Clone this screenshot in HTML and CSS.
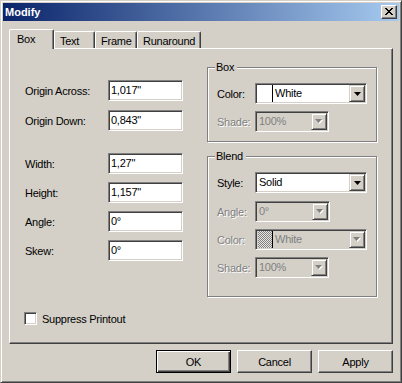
FILE: index.html
```html
<!DOCTYPE html>
<html lang="en">
<head>
    <meta charset="UTF-8">
    <title>Modify</title>
    <link rel="stylesheet" href="styles.css">
</head>
<body>
<div class="window">
    <div class="titlebar">
        <span class="title">Modify</span>
        <button class="close">
            <svg width="8" height="7" viewBox="0 0 8 7" shape-rendering="crispEdges">
                <path d="M0 0h2v1h-2z M6 0h2v1h-2z M1 1h2v1h-2z M5 1h2v1h-2z M2 2h4v1h-4z M3 3h2v1h-2z M2 4h4v1h-4z M1 5h2v1h-2z M5 5h2v1h-2z M0 6h2v1h-2z M6 6h2v1h-2z" fill="#000"/>
            </svg>
        </button>
    </div>

    <div class="client">
        <div class="tabs">
            <div class="tab active tab-box">Box</div>
            <div class="tab tab-text">Text</div>
            <div class="tab tab-frame">Frame</div>
            <div class="tab tab-run">Runaround</div>
        </div>

        <div class="panel">
            <div class="panel-top">
                <div class="fields">
                    <div class="block pos">
                        <div class="row"><label>Origin Across:</label><div class="edit">1,017"</div></div>
                        <div class="row"><label>Origin Down:</label><div class="edit">0,843"</div></div>
                    </div>
                    <div class="block size">
                        <div class="row"><label>Width:</label><div class="edit">1,27"</div></div>
                        <div class="row"><label>Height:</label><div class="edit">1,157"</div></div>
                        <div class="row"><label>Angle:</label><div class="edit">0°</div></div>
                        <div class="row"><label>Skew:</label><div class="edit">0°</div></div>
                    </div>
                </div>

                <div class="groups">
                    <div class="group group-box">
                        <span class="legend">Box</span>
                        <div class="row">
                            <label>Color:</label>
                            <div class="combo wide">
                                <span class="swatch"></span>
                                <span class="value">White</span>
                                <span class="drop"><svg width="7" height="4" viewBox="0 0 7 4"><polygon points="0,0 7,0 3.5,4" fill="#000"/></svg></span>
                            </div>
                        </div>
                        <div class="row">
                            <label class="off">Shade:</label>
                            <div class="combo short disabled">
                                <span class="value">100%</span>
                                <span class="drop"><svg width="8" height="5" viewBox="0 0 8 5"><polygon points="1,1 8,1 4.5,5" fill="#fff"/><polygon points="0,0 7,0 3.5,4" fill="#808080"/></svg></span>
                            </div>
                        </div>
                    </div>

                    <div class="group group-blend">
                        <span class="legend">Blend</span>
                        <div class="row">
                            <label>Style:</label>
                            <div class="combo wide">
                                <span class="value">Solid</span>
                                <span class="drop"><svg width="7" height="4" viewBox="0 0 7 4"><polygon points="0,0 7,0 3.5,4" fill="#000"/></svg></span>
                            </div>
                        </div>
                        <div class="row first">
                            <label class="off">Angle:</label>
                            <div class="combo angle disabled">
                                <span class="value">0°</span>
                                <span class="drop"><svg width="8" height="5" viewBox="0 0 8 5"><polygon points="1,1 8,1 4.5,5" fill="#fff"/><polygon points="0,0 7,0 3.5,4" fill="#808080"/></svg></span>
                            </div>
                        </div>
                        <div class="row">
                            <label class="off">Color:</label>
                            <div class="combo wide disabled">
                                <span class="swatch hatch"></span>
                                <span class="value">White</span>
                                <span class="drop"><svg width="8" height="5" viewBox="0 0 8 5"><polygon points="1,1 8,1 4.5,5" fill="#fff"/><polygon points="0,0 7,0 3.5,4" fill="#808080"/></svg></span>
                            </div>
                        </div>
                        <div class="row">
                            <label class="off">Shade:</label>
                            <div class="combo short disabled">
                                <span class="value">100%</span>
                                <span class="drop"><svg width="8" height="5" viewBox="0 0 8 5"><polygon points="1,1 8,1 4.5,5" fill="#fff"/><polygon points="0,0 7,0 3.5,4" fill="#808080"/></svg></span>
                            </div>
                        </div>
                    </div>
                </div>
            </div>

            <div class="check">
                <span class="checkbox"></span>
                <span>Suppress Printout</span>
            </div>
        </div>

        <div class="buttons">
            <button class="btn default">OK</button>
            <button class="btn">Cancel</button>
            <button class="btn">Apply</button>
        </div>
    </div>
</div>
</body>
</html>
```

FILE: styles.css
```css
body {
    margin: 0;
    background: #d4d0c8;
    font-family: "Liberation Sans", Arial, sans-serif;
    font-size: 11px;
    letter-spacing: -0.25px;
    color: #000;
}

/* window frame */
.window {
    width: 402px;
    height: 383px;
    box-sizing: border-box;
    border: 1px solid;
    border-color: #d4d0c8 #404040 #404040 #d4d0c8;
    box-shadow: inset 1px 1px #fff, inset -1px -1px #808080;
    padding: 2px;
    background: #d4d0c8;
    display: flex;
    flex-direction: column;
}
.titlebar {
    height: 18px;
    flex: none;
    display: flex;
    align-items: center;
    justify-content: space-between;
    padding: 0 2px;
    background: linear-gradient(to right, #0a246a, #a6caf0);
}
.title {
    color: #fff;
    font-weight: bold;
    font-size: 11px;
    letter-spacing: 0;
}
.close {
    width: 16px;
    height: 14px;
    box-sizing: border-box;
    padding: 0 1px 1px 0;
    border: 1px solid;
    border-color: #fff #404040 #404040 #fff;
    box-shadow: inset -1px -1px #808080;
    background: #d4d0c8;
    display: flex;
    align-items: center;
    justify-content: center;
}
.close svg { display: block; }

.client {
    flex: 1;
    padding: 8px 6px 0;
    display: flex;
    flex-direction: column;
}

/* tabs */
.tabs {
    display: flex;
    align-items: flex-end;
    height: 20px;
    margin-bottom: -1px;
    position: relative;
    z-index: 1;
}
.tab {
    box-sizing: border-box;
    height: 17px;
    margin-bottom: 1px;
    padding: 3px 0 0 5px;
    border: 1px solid #fff;
    border-bottom: none;
    border-right-color: #404040;
    box-shadow: inset -1px 0 #808080;
    border-radius: 2px 2px 0 0;
    line-height: 13px;
    background: #d4d0c8;
}
.tab.active {
    height: 20px;
    margin-bottom: 0;
    padding-left: 7px;
}
.tab-box { width: 45px; }
.tab-text { width: 41px; }
.tab-frame { width: 42px; }
.tab-run { width: 64px; }

.panel {
    box-sizing: border-box;
    height: 296px;
    border: 1px solid;
    border-color: #fff #404040 #404040 #fff;
    box-shadow: inset -1px -1px #808080;
    display: flex;
    flex-direction: column;
}
.panel-top { display: flex; }

/* left fields */
.fields {
    padding: 31px 0 0 15px;
}
.row {
    display: flex;
    align-items: center;
}
.fields label { width: 83px; }
.pos .row + .row { margin-top: 9px; }
.size { margin-top: 22px; }
.size .row + .row { margin-top: 8px; }

.edit {
    width: 75px;
    height: 21px;
    box-sizing: border-box;
    border: 1px solid;
    border-color: #808080 #fff #fff #808080;
    box-shadow: inset 1px 1px #404040, inset -1px -1px #d4d0c8;
    background: #fff;
    padding: 0 2px;
    line-height: 18px;
}

/* group boxes */
.groups {
    margin-left: 24px;
    padding-top: 18px;
}
.group {
    position: relative;
    width: 170px;
    box-sizing: border-box;
    border: 1px solid #808080;
    box-shadow: inset 1px 1px #fff, 1px 1px #fff;
    padding: 15px 0 0 9px;
}
.group-box { height: 75px; }
.group-blend { height: 141px; margin-top: 14px; }
.legend {
    position: absolute;
    top: -7px;
    left: 7px;
    padding: 0 3px 0 1px;
    background: #d4d0c8;
    line-height: 13px;
}
.group label { width: 38px; }
.group .row + .row { margin-top: 7px; }
.group .row.first { margin-top: 8px; }
.off {
    color: #808080;
    text-shadow: 1px 1px #fff;
}

/* combo boxes */
.combo {
    display: flex;
    align-items: center;
    height: 21px;
    box-sizing: border-box;
    border: 1px solid;
    border-color: #808080 #fff #fff #808080;
    box-shadow: inset 1px 1px #404040, inset -1px -1px #d4d0c8;
    background: #fff;
    padding: 1px;
}
.combo.wide { width: 112px; }
.combo.short { width: 74px; }
.combo.angle { width: 75px; }
.combo.disabled { background: #d4d0c8; color: #808080; }
.combo .value {
    flex: 1;
    padding-left: 2px;
    line-height: 17px;
}
.swatch {
    width: 16px;
    height: 17px;
    box-sizing: border-box;
    border-right: 1px solid #000;
    background: #fff;
}
.swatch.hatch {
    border-left: 1px solid #d4d0c8;
    background: repeating-conic-gradient(#808080 0 25%, #e8e6e2 0 50%) 0 0 / 2px 2px;
}
.drop {
    width: 16px;
    height: 17px;
    box-sizing: border-box;
    border: 1px solid;
    border-color: #d4d0c8 #404040 #404040 #d4d0c8;
    box-shadow: inset 1px 1px #fff, inset -1px -1px #808080;
    background: #d4d0c8;
    display: flex;
    align-items: center;
    justify-content: center;
}
.drop svg { display: block; }

/* checkbox */
.check {
    display: flex;
    align-items: center;
    margin: 15px 0 0 14px;
}
.checkbox {
    width: 13px;
    height: 13px;
    box-sizing: border-box;
    border: 1px solid;
    border-color: #808080 #fff #fff #808080;
    box-shadow: inset 1px 1px #404040, inset -1px -1px #d4d0c8;
    background: #fff;
    margin-right: 5px;
}

/* buttons */
.buttons {
    display: flex;
    justify-content: flex-end;
    gap: 6px;
    margin-top: 6px;
}
.btn {
    width: 75px;
    height: 23px;
    box-sizing: border-box;
    border: 1px solid;
    border-color: #fff #404040 #404040 #fff;
    box-shadow: inset -1px -1px #808080;
    background: #d4d0c8;
    font-family: inherit;
    font-size: 11px;
    letter-spacing: inherit;
    color: #000;
    padding: 0;
}
.btn.default {
    border-color: #000;
    box-shadow: inset 1px 1px #fff, inset -1px -1px #404040, inset -2px -2px #808080;
}
```
